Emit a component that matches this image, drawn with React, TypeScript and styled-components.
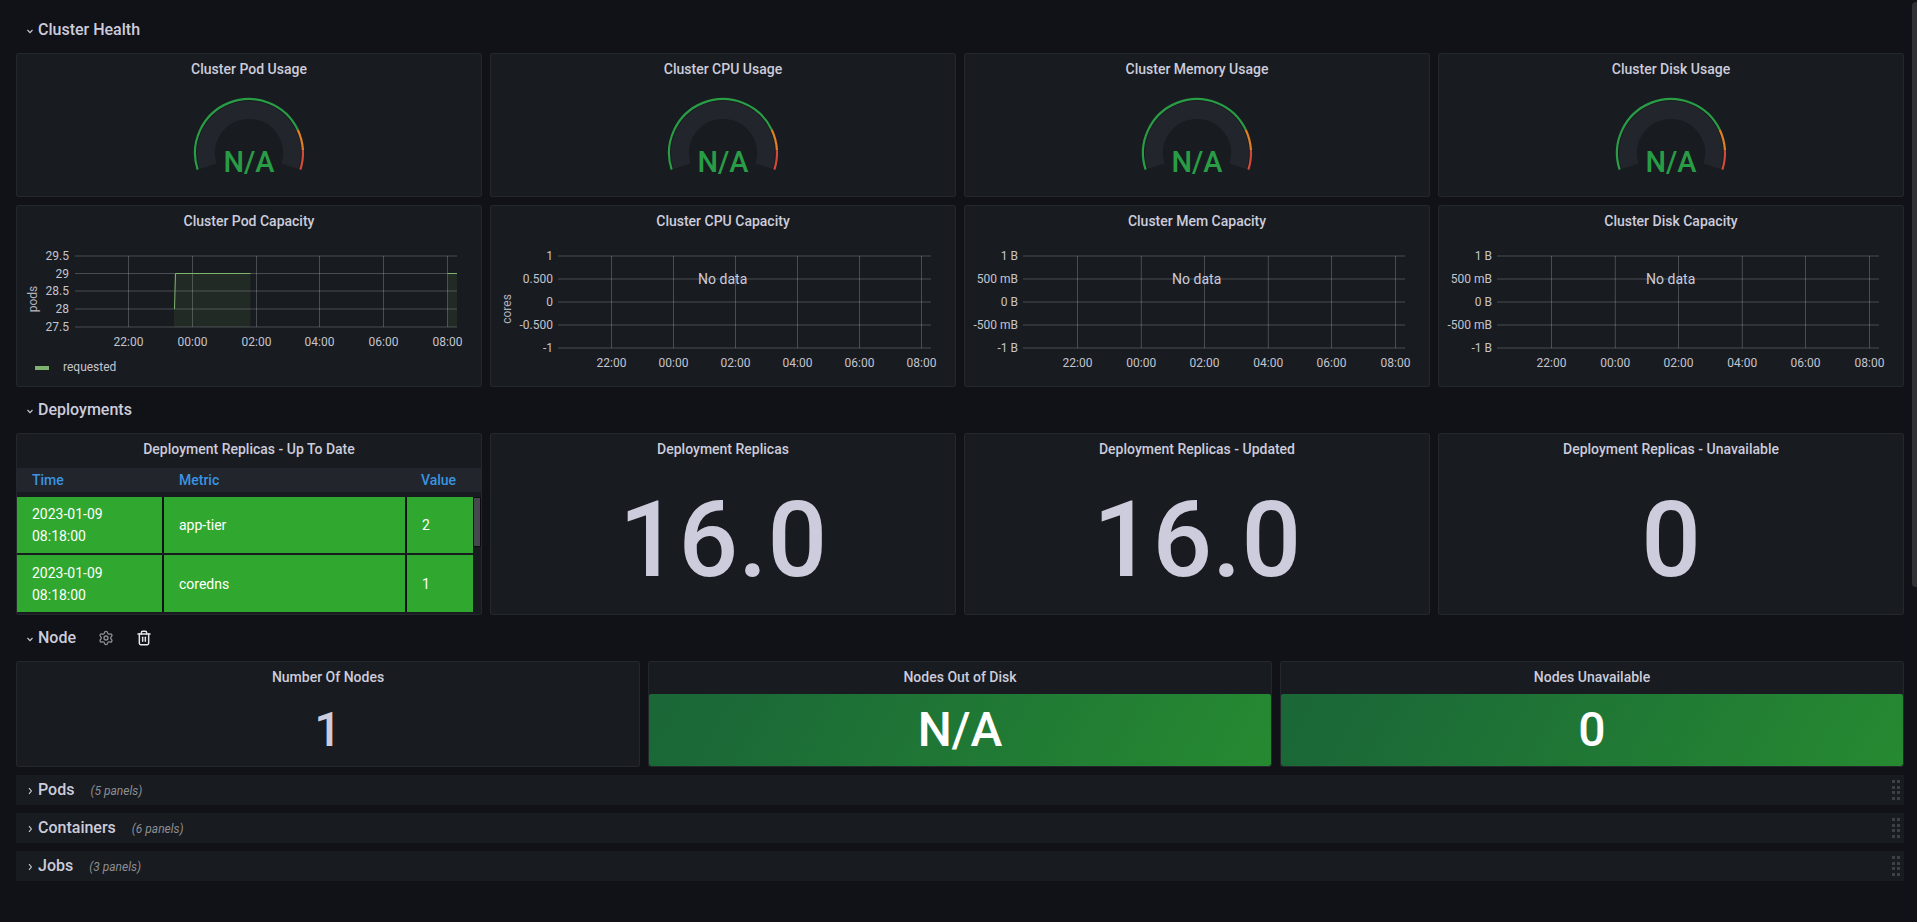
import React from 'react';
import styled, { createGlobalStyle } from 'styled-components';
import { Settings, Trash2 } from 'lucide-react';

const GlobalStyle = createGlobalStyle`
  html, body {
    margin: 0;
    height: 100%;
    overflow: hidden;
    background: #111217;
  }
  body {
    font-family: Roboto, "Liberation Sans", sans-serif;
    color: #ccccdc;
  }
`;

const Page = styled.div`
  box-sizing: border-box;
  height: 922px;
  padding: 15px 13px 0 16px;
  background: #111217;
`;

const PageScrollbar = styled.div`
  position: fixed;
  top: 2px;
  right: 0;
  width: 5px;
  height: 585px;
  background: #2f3136;
  border-radius: 4px 0 0 4px;
`;

const Section = styled.section`
  margin-bottom: 8px;
`;

const SectionHeader = styled.div`
  display: flex;
  align-items: center;
  height: 30px;
  margin-bottom: 8px;
  padding-left: 8px;
`;

const CollapsedRow = styled.div`
  display: flex;
  align-items: center;
  height: 30px;
  margin-bottom: 8px;
  padding: 0 4px 0 8px;
  background: #181b1f;
`;

const Chevron = styled.svg`
  flex: none;
  width: 12px;
  height: 12px;
  margin-top: 2px;
  margin-right: 2px;
`;

const SectionTitle = styled.span`
  font-size: 16px;
  font-weight: 500;
  line-height: 22px;
  color: #ccccdc;
`;

const PanelCount = styled.span`
  margin-left: 16px;
  margin-top: 2px;
  font-size: 12px;
  font-style: italic;
  color: #8e8e93;
`;

const HeaderIcons = styled.div`
  display: flex;
  align-items: center;
  gap: 22px;
  margin-left: 22px;
`;

const Grip = styled.div`
  display: grid;
  grid-template-columns: 3px 3px;
  grid-auto-rows: 3px;
  gap: 2.5px 2px;
  margin-left: auto;
`;

const GripDot = styled.i`
  display: block;
  background: #3c3f44;
`;

const Row = styled.div<{ $cols: number; $height: number }>`
  display: grid;
  grid-template-columns: repeat(${p => p.$cols}, 1fr);
  gap: 8px;
  height: ${p => p.$height}px;
`;

const Stack = styled.div`
  display: flex;
  flex-direction: column;
  gap: 8px;
`;

const Panel = styled.div`
  box-sizing: border-box;
  display: flex;
  flex-direction: column;
  min-width: 0;
  position: relative;
  overflow: hidden;
  background: #181b1f;
  border: 1px solid rgba(204, 204, 220, 0.07);
  border-radius: 3px;
`;

const PanelTitle = styled.div`
  flex: none;
  height: 30px;
  padding-bottom: 2px;
  font-size: 14px;
  font-weight: 500;
  line-height: 30px;
  text-align: center;
  color: #ccccdc;
`;

const GaugeBody = styled.div`
  flex: 1;
  display: flex;
  justify-content: center;
`;

const GaugeLabel = styled.text`
  font-family: Roboto, sans-serif;
  font-size: 29px;
  font-weight: 500;
  fill: #299c46;
`;

const ChartSvg = styled.svg`
  display: block;
  flex: none;
  width: 464px;
`;

const AxisText = styled.text`
  font-family: Roboto, sans-serif;
  font-size: 12px;
  fill: #c4c4d0;
`;

const AxisName = styled.text`
  font-family: Roboto, sans-serif;
  font-size: 12px;
  fill: #b4b4c0;
`;

const NoData = styled.text`
  font-family: Roboto, sans-serif;
  font-size: 14px;
  fill: #ccccdc;
`;

const Legend = styled.div`
  display: flex;
  align-items: center;
  gap: 14px;
  height: 18px;
  padding-left: 18px;
  font-size: 12px;
  color: #c4c4d0;
`;

const LegendSwatch = styled.i`
  display: block;
  width: 14px;
  height: 4px;
  margin-top: 2px;
  background: #7eb26d;
`;

const TableHead = styled.div`
  display: grid;
  grid-template-columns: 145px 241px 66px;
  gap: 2px;
  height: 24px;
  margin-top: 2px;
  background: #22252b;
  font-size: 14px;
  font-weight: 500;
  line-height: 24px;
  color: #3a94e0;
`;

const HeadCell = styled.div<{ $pad: number }>`
  padding-left: ${p => p.$pad}px;
`;

const TableBody = styled.div`
  display: flex;
  flex-direction: column;
  gap: 2px;
  margin-top: 5px;
`;

const TableRow = styled.div<{ $height: number }>`
  display: grid;
  grid-template-columns: 145px 241px 66px;
  gap: 2px;
  width: 456px;
  height: ${p => p.$height}px;
  background: #111217;
`;

const TableCell = styled.div`
  display: flex;
  align-items: center;
  padding-left: 15px;
  background: #30a830;
  font-size: 14px;
  line-height: 22px;
  color: #ffffff;
`;

const TableScrollThumb = styled.div`
  position: absolute;
  top: 63px;
  right: 0;
  box-sizing: border-box;
  width: 8px;
  height: 50px;
  background: #47484f;
  border: 1px solid #0c0d10;
`;

const StatBody = styled.div`
  flex: 1;
  display: flex;
  align-items: center;
  justify-content: center;
  font-weight: 500;
`;

const BigValue = styled.span`
  font-size: 105px;
  line-height: 1;
  color: #ccccdc;
`;

const SmallValue = styled.span`
  font-size: 48px;
  line-height: 1;
  color: #ccccdc;
`;

const ColoredStat = styled(StatBody)`
  background: linear-gradient(120deg, #1b6737 0%, #1b6a37 15%, #268a31 100%);
  border-radius: 2px;
  font-size: 48px;
  line-height: 1;
  color: #ffffff;
`;

type ChartConfig = {
  title: string;
  left: number;
  labelRight: number;
  yLabels: string[];
  yLines: number[];
  xLines: number[];
  axisName?: string;
  axisNameY?: number;
};

const X_NAMES = ['22:00', '00:00', '02:00', '04:00', '06:00', '08:00'];
const NO_DATA_LINES = [18, 41, 64, 87, 110];
const BYTES = ['1 B', '500 mB', '0 B', '-500 mB', '-1 B'];
const BYTE_LINES = [112.5, 176.3, 239.5, 303.3, 366.5, 430.5];

const CHARTS: ChartConfig[] = [
  {
    title: 'Cluster Pod Capacity',
    left: 58,
    labelRight: 52,
    yLabels: ['29.5', '29', '28.5', '28', '27.5'],
    yLines: [18, 35.5, 53, 71, 89],
    xLines: [111.5, 175.5, 239.5, 302.5, 366.5, 430.5],
    axisName: 'pods',
    axisNameY: 61,
  },
  {
    title: 'Cluster CPU Capacity',
    left: 67,
    labelRight: 62,
    yLabels: ['1', '0.500', '0', '-0.500', '-1'],
    yLines: NO_DATA_LINES,
    xLines: [120.5, 182.5, 244.5, 306.5, 368.5, 430.5],
    axisName: 'cores',
    axisNameY: 71,
  },
  {
    title: 'Cluster Mem Capacity',
    left: 58,
    labelRight: 53,
    yLabels: BYTES,
    yLines: NO_DATA_LINES,
    xLines: BYTE_LINES,
  },
  {
    title: 'Cluster Disk Capacity',
    left: 58,
    labelRight: 53,
    yLabels: BYTES,
    yLines: NO_DATA_LINES,
    xLines: BYTE_LINES,
  },
];

const GRID = 'rgba(204,204,220,0.28)';
const RIGHT = 440;

const polar = (r: number, deg: number) => {
  const a = (deg * Math.PI) / 180;
  return [60 + r * Math.cos(a), 67 - r * Math.sin(a)];
};

// arc going clockwise on screen, from one angle to a smaller one
const arc = (r: number, from: number, to: number) => {
  const [x1, y1] = polar(r, from);
  const [x2, y2] = polar(r, to);
  return `M${x1} ${y1}A${r} ${r} 0 ${from - to > 180 ? 1 : 0} 1 ${x2} ${y2}`;
};

const Gauge = () => (
  <svg width="120" height="110" viewBox="0 0 120 110">
    <path d={arc(43, 198, -18)} fill="none" stroke="#22252b" strokeWidth="18" />
    <path d={arc(54, 198, 25.6)} fill="none" stroke="#299c46" strokeWidth="2.2" />
    <path d={arc(54, 25.6, 3)} fill="none" stroke="#e07f23" strokeWidth="2.2" />
    <path d={arc(54, 3, -18)} fill="none" stroke="#d44a3a" strokeWidth="2.2" />
    <GaugeLabel x="60" y="86" textAnchor="middle">N/A</GaugeLabel>
  </svg>
);

const Chart = ({ cfg, height, hasData }: { cfg: ChartConfig; height: number; hasData: boolean }) => {
  const top = cfg.yLines[0];
  const bottom = cfg.yLines[cfg.yLines.length - 1];
  const labelY = bottom + 19;
  return (
    <ChartSvg height={height} viewBox={`0 0 464 ${height}`}>
      {cfg.yLines.map(y => (
        <line key={y} x1={cfg.left} x2={RIGHT} y1={y} y2={y} stroke={GRID} />
      ))}
      {cfg.xLines.map(x => (
        <line key={x} x1={x} x2={x} y1={top} y2={bottom} stroke={GRID} />
      ))}
      {hasData && (
        <>
          <path d="M157 89V35.5H233.5V89Z" fill="rgba(126,178,109,0.1)" />
          <path d="M430.5 89V35.5H440V89Z" fill="rgba(126,178,109,0.1)" />
          <path d="M157.5 71L158.5 35.5H233.5M430.5 35.5H440" fill="none" stroke="#7eb26d" strokeWidth="1" />
        </>
      )}
      {cfg.yLabels.map((label, i) => (
        <AxisText key={label} x={cfg.labelRight} y={cfg.yLines[i] + 4} textAnchor="end">{label}</AxisText>
      ))}
      {cfg.xLines.map((x, i) => (
        <AxisText key={x} x={x} y={labelY} textAnchor="middle">{X_NAMES[i]}</AxisText>
      ))}
      {cfg.axisName && (
        <AxisName
          textAnchor="middle"
          transform={`translate(20 ${cfg.axisNameY}) rotate(-90)`}
        >
          {cfg.axisName}
        </AxisName>
      )}
      {!hasData && <NoData x="231.7" y="46" textAnchor="middle">No data</NoData>}
    </ChartSvg>
  );
};

const ChevronIcon = ({ open }: { open: boolean }) => (
  <Chevron viewBox="0 0 12 12" fill="none" stroke="#ccccdc" strokeWidth="1.1">
    {open ? <path d="M3.5 5l2.5 2.6L8.5 5" /> : <path d="M5 3.2L7.4 6 5 8.8" />}
  </Chevron>
);

const GripIcon = () => (
  <Grip>
    {Array.from({ length: 8 }, (_, i) => <GripDot key={i} />)}
  </Grip>
);

const GAUGES = ['Cluster Pod Usage', 'Cluster CPU Usage', 'Cluster Memory Usage', 'Cluster Disk Usage'];

const TABLE_ROWS = [
  { metric: 'app-tier', value: '2', height: 56 },
  { metric: 'coredns', value: '1', height: 57 },
];

const App: React.FC = () => (
  <Page>
    <GlobalStyle />
    <PageScrollbar />

    <Section>
      <SectionHeader>
        <ChevronIcon open />
        <SectionTitle>Cluster Health</SectionTitle>
      </SectionHeader>
      <Stack>
        <Row $cols={4} $height={144}>
          {GAUGES.map(title => (
            <Panel key={title}>
              <PanelTitle>{title}</PanelTitle>
              <GaugeBody><Gauge /></GaugeBody>
            </Panel>
          ))}
        </Row>
        <Row $cols={4} $height={182}>
          {CHARTS.map((cfg, i) => (
            <Panel key={cfg.title}>
              <PanelTitle>{cfg.title}</PanelTitle>
              <Chart cfg={cfg} height={i === 0 ? 120 : 148} hasData={i === 0} />
              {i === 0 && (
                <Legend>
                  <LegendSwatch />
                  requested
                </Legend>
              )}
            </Panel>
          ))}
        </Row>
      </Stack>
    </Section>

    <Section>
      <SectionHeader>
        <ChevronIcon open />
        <SectionTitle>Deployments</SectionTitle>
      </SectionHeader>
      <Row $cols={4} $height={182}>
        <Panel>
          <PanelTitle>Deployment Replicas - Up To Date</PanelTitle>
          <TableHead>
            <HeadCell $pad={15}>Time</HeadCell>
            <HeadCell $pad={15}>Metric</HeadCell>
            <HeadCell $pad={14}>Value</HeadCell>
          </TableHead>
          <TableBody>
            {TABLE_ROWS.map(row => (
              <TableRow key={row.metric} $height={row.height}>
                <TableCell>2023-01-09<br />08:18:00</TableCell>
                <TableCell>{row.metric}</TableCell>
                <TableCell>{row.value}</TableCell>
              </TableRow>
            ))}
          </TableBody>
          <TableScrollThumb />
        </Panel>
        <Panel>
          <PanelTitle>Deployment Replicas</PanelTitle>
          <StatBody><BigValue>16.0</BigValue></StatBody>
        </Panel>
        <Panel>
          <PanelTitle>Deployment Replicas - Updated</PanelTitle>
          <StatBody><BigValue>16.0</BigValue></StatBody>
        </Panel>
        <Panel>
          <PanelTitle>Deployment Replicas - Unavailable</PanelTitle>
          <StatBody><BigValue>0</BigValue></StatBody>
        </Panel>
      </Row>
    </Section>

    <Section>
      <SectionHeader>
        <ChevronIcon open />
        <SectionTitle>Node</SectionTitle>
        <HeaderIcons>
          <Settings size={16} color="#8e8e93" />
          <Trash2 size={16} color="#e4e4ec" strokeWidth={2.2} />
        </HeaderIcons>
      </SectionHeader>
      <Row $cols={3} $height={106}>
        <Panel>
          <PanelTitle>Number Of Nodes</PanelTitle>
          <StatBody><SmallValue>1</SmallValue></StatBody>
        </Panel>
        <Panel>
          <PanelTitle>Nodes Out of Disk</PanelTitle>
          <ColoredStat>N/A</ColoredStat>
        </Panel>
        <Panel>
          <PanelTitle>Nodes Unavailable</PanelTitle>
          <ColoredStat>0</ColoredStat>
        </Panel>
      </Row>
    </Section>

    <CollapsedRow>
      <ChevronIcon open={false} />
      <SectionTitle>Pods</SectionTitle>
      <PanelCount>(5 panels)</PanelCount>
      <GripIcon />
    </CollapsedRow>
    <CollapsedRow>
      <ChevronIcon open={false} />
      <SectionTitle>Containers</SectionTitle>
      <PanelCount>(6 panels)</PanelCount>
      <GripIcon />
    </CollapsedRow>
    <CollapsedRow>
      <ChevronIcon open={false} />
      <SectionTitle>Jobs</SectionTitle>
      <PanelCount>(3 panels)</PanelCount>
      <GripIcon />
    </CollapsedRow>
  </Page>
);

export default App;
